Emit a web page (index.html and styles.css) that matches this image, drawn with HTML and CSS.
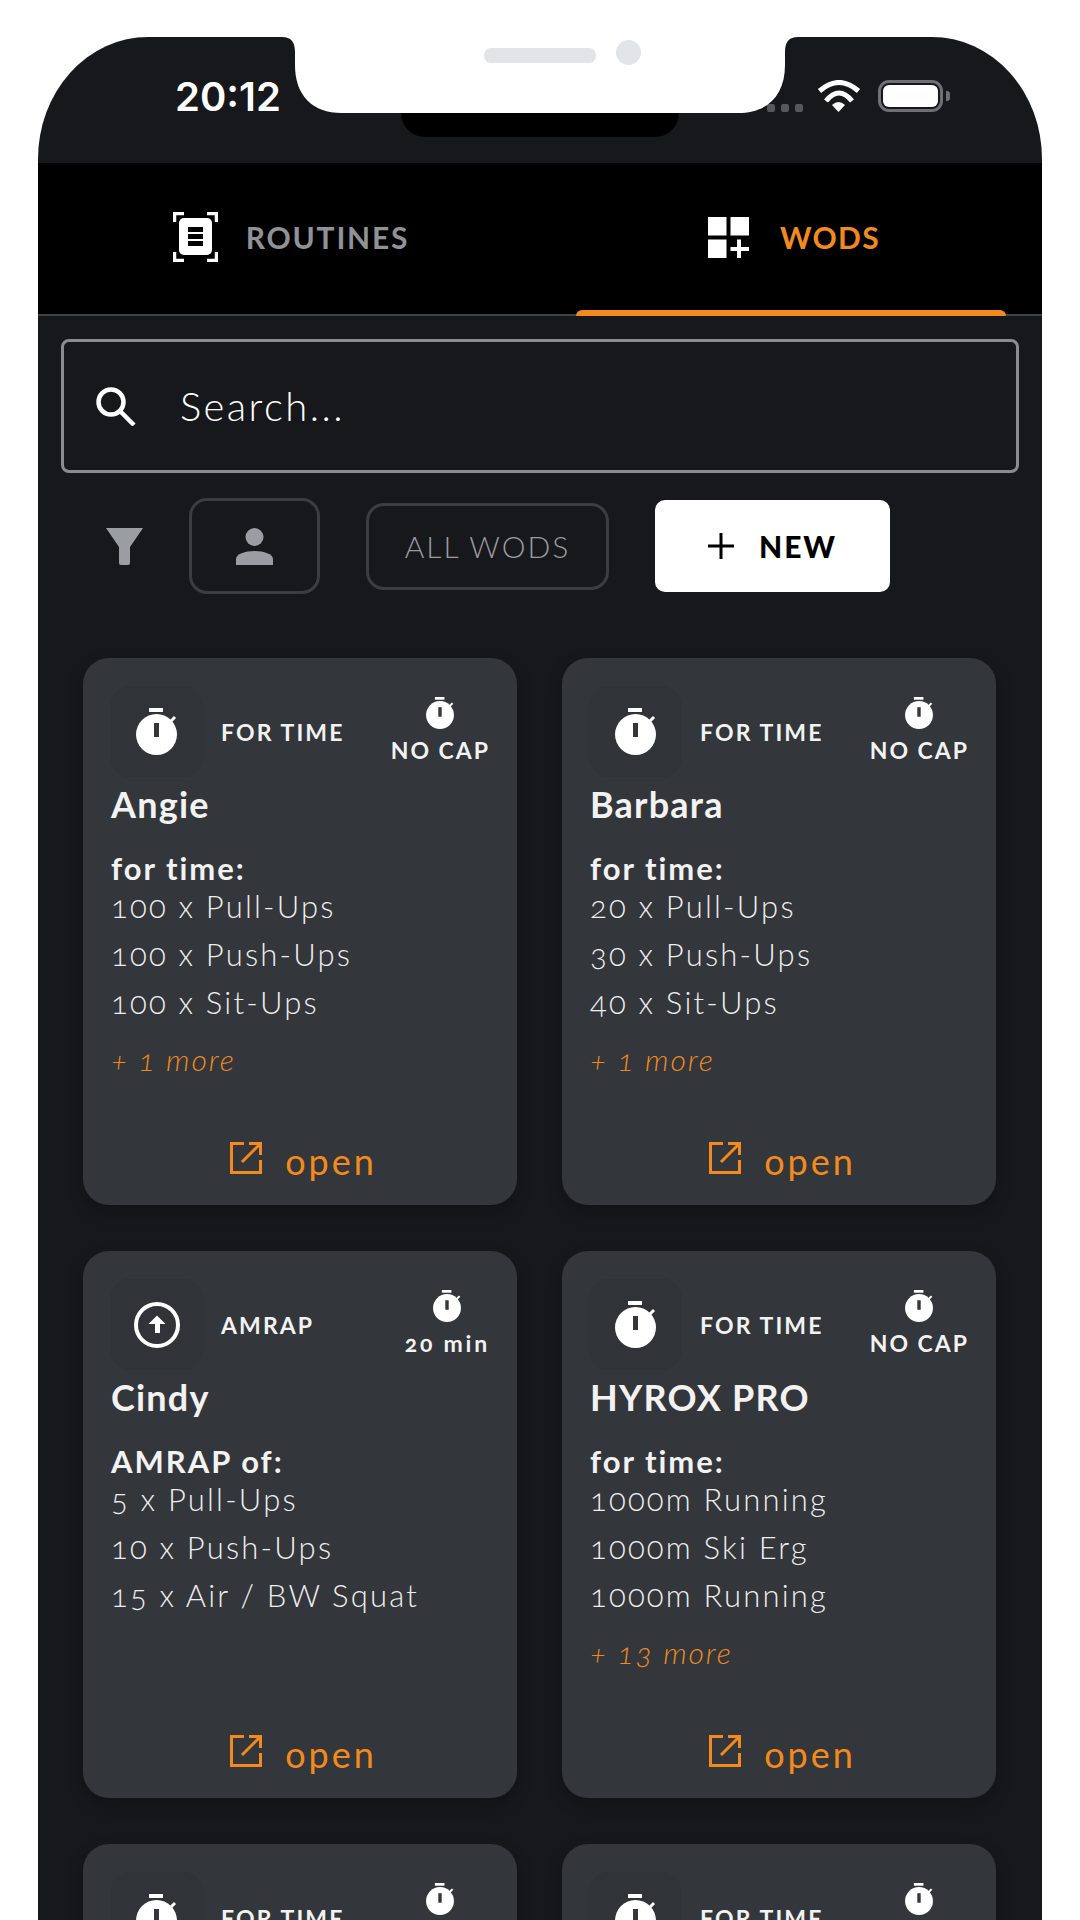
FILE: index.html
```html
<!DOCTYPE html>
<html>
<head>
    <title>WODs</title>
    <link rel="stylesheet" href="styles.css">
</head>
<body>
    <svg class="defs" width="0" height="0">
        <symbol id="watch" viewBox="0 0 41 47">
            <rect x="13" y="0" width="14" height="4" fill="#fff"/>
            <circle cx="20.5" cy="26.5" r="20.5" fill="#fff"/>
            <path d="M33 15l6-6" stroke="#fff" stroke-width="3"/>
            <rect x="18" y="15" width="5" height="14" fill="#33363a"/>
        </symbol>
        <symbol id="open" viewBox="0 0 32 32">
            <path d="M14 1.5H1.5v29h29V18M12 20L29 3M19 1.5h11.5V13" fill="none" stroke="#f28a1e" stroke-width="3"/>
        </symbol>
    </svg>

    <div class="phone">
        <svg class="notch" width="516" height="76" viewBox="0 0 516 76">
            <path d="M0 0C9 0 13 5 13 15V28C13 58 30 76 60 76H456C486 76 503 58 503 28V15C503 5 507 0 516 0Z" fill="#fff"/>
            <rect x="202" y="11" width="112" height="15" rx="7" fill="#e2e4e9"/>
            <circle cx="346.500" cy="15.500" r="12.500" fill="#e2e4e9"/>
        </svg>
        <div class="notch-stub"></div>

        <div class="status">
            <span class="time">20:12</span>
            <div class="status-right">
                <div class="dots"><i></i><i></i><i></i></div>
                <svg width="44" height="32" viewBox="0 0 44 32">
                    <path d="M2.500 11Q22-6 41.500 11M9 21Q22 5 35 21" fill="none" stroke="#fff" stroke-width="5"/>
                    <path d="M15 25Q21.500 19 28 25L21.500 32Z" fill="#fff"/>
                </svg>
                <div class="battery"><i></i></div>
            </div>
        </div>

        <div class="tabs">
            <div class="tab">
                <svg width="45" height="50" viewBox="0 0 45 50">
                    <path d="M1.500 10V1.500H11M34 1.500H43.500V10M1.500 40V48.500H11M34 48.500H43.500V40" fill="none" stroke="#fff" stroke-width="3.500"/>
                    <rect x="6" y="6" width="33" height="37" rx="5" fill="#fff"/>
                    <path d="M15 15h15v5H15zM15 22h15v5H15zM15 29h15v5H15z" fill="#000"/>
                </svg>
                <span>ROUTINES</span>
            </div>
            <div class="tab tab-active">
                <svg width="41" height="41" viewBox="0 0 41 41">
                    <path d="M0 0h18.500v18.500H0zM22.500 0H41v18.500H22.500zM0 22.500h18.500V41H0zM22.500 30H29v-7.500h4V30h8v4h-8v7h-4v-7h-6.500z" fill="#fff"/>
                </svg>
                <span>WODS</span>
            </div>
        </div>

        <div class="search">
            <svg width="40" height="39" viewBox="0 0 40 39">
                <circle cx="15" cy="15" r="12.500" fill="none" stroke="#fff" stroke-width="4.500"/>
                <path d="M24 24l14 14" stroke="#fff" stroke-width="4.500"/>
            </svg>
            <span>Search...</span>
        </div>

        <div class="filters">
            <svg width="37" height="37" viewBox="0 0 37 37">
                <path d="M0 0H37L24 19V35a2 2 0 0 1-2 2h-7a2 2 0 0 1-2-2V19Z" fill="#9a9ea3"/>
            </svg>
            <div class="btn-user">
                <svg width="37" height="37" viewBox="0 0 37 37">
                    <circle cx="18.500" cy="9" r="9" fill="#9a9ea3"/>
                    <path d="M0 37v-6C0 26 9 23 18.500 23S37 26 37 31v6Z" fill="#9a9ea3"/>
                </svg>
            </div>
            <div class="btn-all">ALL WODS</div>
            <div class="btn-new">
                <svg width="26" height="26" viewBox="0 0 26 26">
                    <path d="M13 0v26M0 13h26" stroke="#000" stroke-width="3"/>
                </svg>
                <span>NEW</span>
            </div>
        </div>

        <div class="grid">
            <div class="card">
                <div class="card-top">
                    <div class="type-icon"><svg class="watch-big"><use href="#watch"/></svg></div>
                    <span class="type">FOR TIME</span>
                    <div class="cap"><svg class="watch-small"><use href="#watch"/></svg><span>NO CAP</span></div>
                </div>
                <h2>Angie</h2>
                <h3>for time:</h3>
                <ul>
                    <li>100 x Pull-Ups</li>
                    <li>100 x Push-Ups</li>
                    <li>100 x Sit-Ups</li>
                </ul>
                <p class="more">+ 1 more</p>
                <div class="open"><svg class="open-icon"><use href="#open"/></svg><span>open</span></div>
            </div>

            <div class="card">
                <div class="card-top">
                    <div class="type-icon"><svg class="watch-big"><use href="#watch"/></svg></div>
                    <span class="type">FOR TIME</span>
                    <div class="cap"><svg class="watch-small"><use href="#watch"/></svg><span>NO CAP</span></div>
                </div>
                <h2>Barbara</h2>
                <h3>for time:</h3>
                <ul>
                    <li>20 x Pull-Ups</li>
                    <li>30 x Push-Ups</li>
                    <li>40 x Sit-Ups</li>
                </ul>
                <p class="more">+ 1 more</p>
                <div class="open"><svg class="open-icon"><use href="#open"/></svg><span>open</span></div>
            </div>

            <div class="card">
                <div class="card-top">
                    <div class="type-icon">
                        <svg width="46" height="46" viewBox="0 0 46 46">
                            <circle cx="23" cy="23" r="21" fill="none" stroke="#fff" stroke-width="4"/>
                            <path d="M23 13.500L31.500 22H26V31H21V22H14.500Z" fill="#fff"/>
                        </svg>
                    </div>
                    <span class="type">AMRAP</span>
                    <div class="cap cap-time"><svg class="watch-small"><use href="#watch"/></svg><span>20 min</span></div>
                </div>
                <h2>Cindy</h2>
                <h3>AMRAP of:</h3>
                <ul>
                    <li>5 x Pull-Ups</li>
                    <li>10 x Push-Ups</li>
                    <li>15 x Air / BW Squat</li>
                </ul>
                <div class="open"><svg class="open-icon"><use href="#open"/></svg><span>open</span></div>
            </div>

            <div class="card">
                <div class="card-top">
                    <div class="type-icon"><svg class="watch-big"><use href="#watch"/></svg></div>
                    <span class="type">FOR TIME</span>
                    <div class="cap"><svg class="watch-small"><use href="#watch"/></svg><span>NO CAP</span></div>
                </div>
                <h2>HYROX PRO</h2>
                <h3>for time:</h3>
                <ul>
                    <li>1000m Running</li>
                    <li>1000m Ski Erg</li>
                    <li>1000m Running</li>
                </ul>
                <p class="more">+ 13 more</p>
                <div class="open"><svg class="open-icon"><use href="#open"/></svg><span>open</span></div>
            </div>

            <div class="card">
                <div class="card-top">
                    <div class="type-icon"><svg class="watch-big"><use href="#watch"/></svg></div>
                    <span class="type">FOR TIME</span>
                    <div class="cap"><svg class="watch-small"><use href="#watch"/></svg><span>NO CAP</span></div>
                </div>
            </div>

            <div class="card">
                <div class="card-top">
                    <div class="type-icon"><svg class="watch-big"><use href="#watch"/></svg></div>
                    <span class="type">FOR TIME</span>
                    <div class="cap"><svg class="watch-small"><use href="#watch"/></svg><span>NO CAP</span></div>
                </div>
            </div>
        </div>
    </div>
</body>
</html>
```

FILE: styles.css
```css
html, body {
    margin: 0;
    padding: 0;
    height: 1920px;
    overflow: hidden;
    background-color: #fff;
}

body {
    font-family: Lato, "Open Sans", sans-serif;
    font-variant-numeric: oldstyle-nums;
    color: #f2f2f2;
}

svg {
    display: block;
    flex: none;
}

.defs {
    position: absolute;
}

.phone {
    position: relative;
    width: 1004px;
    height: 1883px;
    margin: 37px 0 0 38px;
    overflow: hidden;
    background-color: #16181c;
    border-radius: 110px 110px 0 0 / 122px 122px 0 0;
}

.notch {
    position: absolute;
    top: 0;
    left: 244px;
}

.notch-stub {
    position: absolute;
    top: 76px;
    left: 363px;
    width: 278px;
    height: 24px;
    background-color: #000;
    border-radius: 0 0 28px 28px;
}

/* status bar */
.status {
    display: flex;
    justify-content: space-between;
    align-items: center;
    height: 118px;
    padding: 0 93px 8px 137px;
}

.time {
    font-family: Inter, sans-serif;
    font-size: 40px;
    font-weight: 600;
    font-variant-numeric: lining-nums;
    color: #fff;
}

.status-right {
    display: flex;
    align-items: center;
}

.dots {
    display: flex;
    gap: 6px;
    margin: 24px 14px 0 0;
}

.dots i {
    width: 8px;
    height: 8px;
    border-radius: 2px;
    background-color: #55575a;
}

.battery {
    position: relative;
    box-sizing: border-box;
    width: 65px;
    height: 32px;
    margin: 0 6px 0 17px;
    padding: 2px;
    border: 3px solid #6f7073;
    border-radius: 11px;
}

.battery i {
    display: block;
    height: 100%;
    background-color: #fff;
    border-radius: 6px;
}

.battery:after {
    content: "";
    position: absolute;
    top: 8px;
    right: -10px;
    width: 4px;
    height: 10px;
    background-color: #6f7073;
    border-radius: 0 3px 3px 0;
}

/* tabs */
.tabs {
    display: flex;
    box-sizing: border-box;
    height: 153px;
    padding-bottom: 3px;
    background-color: #000;
    border-bottom: 2px solid #3f4346;
}

.tab {
    position: relative;
    display: flex;
    flex: 1;
    justify-content: center;
    align-items: center;
    gap: 28px;
    padding-left: 5px;
    font-size: 30px;
    font-weight: 700;
    letter-spacing: 1.8px;
    color: #8f9296;
}

.tab-active {
    gap: 31px;
    padding-left: 7px;
    letter-spacing: 1.4px;
    color: #f28a1e;
}

.tab-active:after {
    content: "";
    position: absolute;
    left: 37px;
    right: 36px;
    bottom: -5px;
    height: 6px;
    background-color: #f28a1e;
    border-radius: 6px 6px 0 0;
}

/* search and filters */
.search {
    display: flex;
    align-items: center;
    gap: 44px;
    box-sizing: border-box;
    width: 958px;
    height: 134px;
    margin: 23px 0 0 23px;
    padding-left: 32px;
    border: 3px solid #8a8d90;
    border-radius: 8px;
    font-size: 40px;
    font-weight: 300;
    letter-spacing: 2.4px;
    color: #fff;
}

.filters {
    display: flex;
    align-items: center;
    gap: 46px;
    margin: 25px 0 0 68px;
}

.btn-user {
    display: flex;
    justify-content: center;
    align-items: center;
    box-sizing: border-box;
    width: 131px;
    height: 96px;
    border: 3px solid #3a3e41;
    border-radius: 18px;
}

.btn-all {
    display: flex;
    justify-content: center;
    align-items: center;
    box-sizing: border-box;
    width: 243px;
    height: 87px;
    border: 3px solid #3a3e41;
    border-radius: 18px;
    font-size: 30px;
    font-weight: 300;
    letter-spacing: 2px;
    color: #9a9da0;
}

.btn-new {
    display: flex;
    justify-content: center;
    align-items: center;
    gap: 25px;
    width: 235px;
    height: 92px;
    background-color: #fff;
    border-radius: 10px;
    font-size: 30px;
    font-weight: 900;
    letter-spacing: 2px;
    color: #000;
}

/* cards */
.grid {
    display: grid;
    grid-template-columns: 434px 434px;
    grid-auto-rows: 547px;
    gap: 46px 45px;
    margin: 64px 0 0 45px;
}

.card {
    display: flex;
    flex-direction: column;
    box-sizing: border-box;
    padding: 28px 27px 22px 28px;
    background-color: #33363a;
    border-radius: 26px;
    box-shadow: 0 6px 16px rgba(0, 0, 0, 0.25);
}

.card-top {
    display: flex;
    align-items: center;
}

.type-icon {
    display: flex;
    justify-content: center;
    align-items: center;
    width: 91px;
    height: 91px;
    margin-right: 19px;
    background-color: #303337;
    border-radius: 18px;
}

.watch-big {
    width: 41px;
    height: 47px;
}

.watch-small {
    width: 28px;
    height: 32px;
}

.type {
    font-size: 23px;
    font-weight: 700;
    letter-spacing: 2.1px;
}

.cap {
    display: flex;
    flex-direction: column;
    align-items: center;
    gap: 10px;
    margin: -6px 0 0 auto;
    font-size: 23px;
    font-weight: 700;
    line-height: 22px;
    letter-spacing: 2px;
}

.cap-time {
    letter-spacing: 2.8px;
}

.card h2 {
    margin: 5px 0 0;
    font-size: 36px;
    font-weight: 700;
    line-height: 44px;
    letter-spacing: 1.2px;
}

.card h3 {
    margin: 28px 0 0;
    font-size: 31px;
    font-weight: 700;
    line-height: 28px;
    letter-spacing: 2px;
}

.card ul {
    margin: 0;
    padding: 0;
    list-style: none;
}

.card li {
    font-size: 31px;
    font-weight: 300;
    line-height: 48px;
    letter-spacing: 2.2px;
    color: #eee;
}

.more {
    margin: 9px 0 0;
    font-size: 30px;
    font-weight: 300;
    font-style: italic;
    line-height: 48px;
    letter-spacing: 1.9px;
    color: #f28a1e;
}

.open {
    display: flex;
    justify-content: center;
    align-items: center;
    gap: 23px;
    margin-top: auto;
    padding-left: 6px;
    font-size: 36px;
    font-weight: 400;
    line-height: 44px;
    letter-spacing: 3px;
    color: #f28a1e;
}

.open-icon {
    width: 32px;
    height: 32px;
    margin-top: -6px;
}
```
